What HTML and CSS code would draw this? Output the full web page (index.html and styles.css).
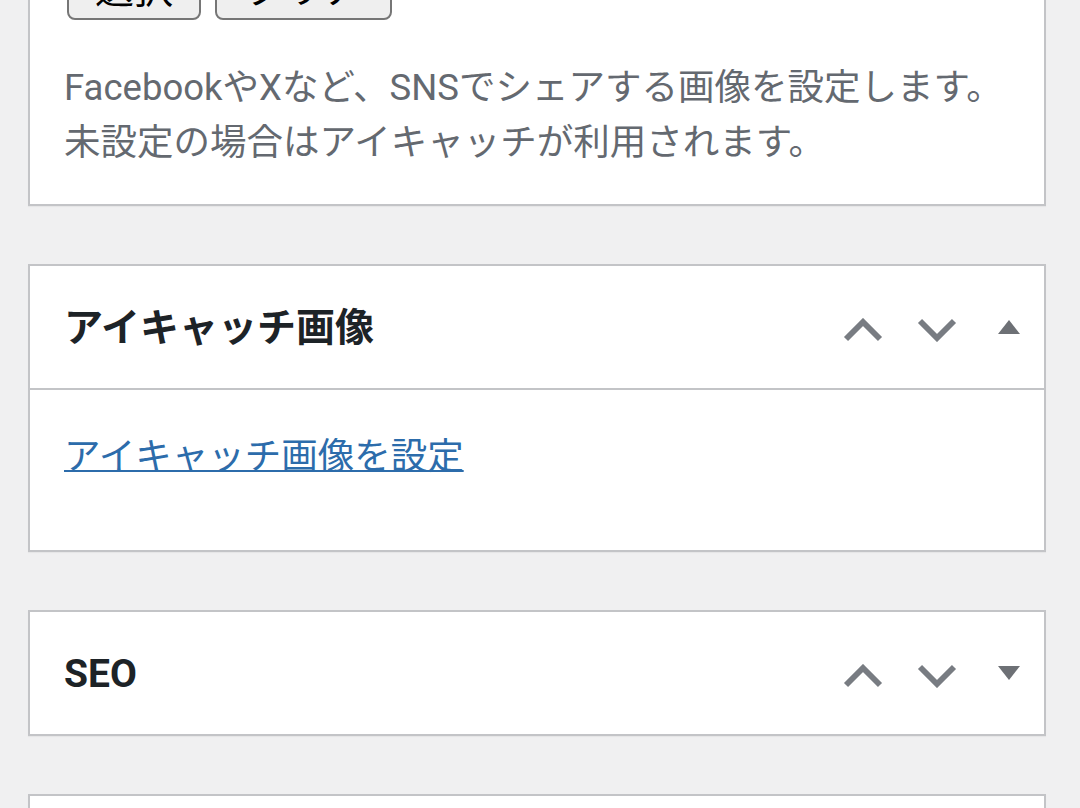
FILE: index.html
```html
<!DOCTYPE html>
<html lang="ja">
<head>
<meta charset="utf-8">
<title>投稿の編集</title>
<link rel="stylesheet" href="styles.css">
</head>
<body>
<div class="meta-boxes">
  <section class="postbox postbox-open">
    <div class="inside inside-top">
      <div class="button-row">
        <button class="plain-button" type="button">選択</button>
        <button class="plain-button plain-button-wide" type="button">クリア</button>
      </div>
      <p class="description">FacebookやXなど、SNSでシェアする画像を設定します。<br>未設定の場合はアイキャッチが利用されます。</p>
    </div>
  </section>

  <section class="postbox">
    <header class="postbox-header with-divider">
      <h2 class="hndle">アイキャッチ画像</h2>
      <div class="handle-actions">
        <button class="handle-button" type="button" aria-label="上へ移動">
          <svg class="chevron" viewBox="0 0 40 24"><polyline points="3,21 20,4 37,21"/></svg>
        </button>
        <button class="handle-button" type="button" aria-label="下へ移動">
          <svg class="chevron" viewBox="0 0 40 24"><polyline points="3,3 20,20 37,3"/></svg>
        </button>
        <button class="handle-button toggle-button" type="button" aria-label="パネルを閉じる">
          <svg class="toggle" viewBox="0 0 22 16"><polygon points="0,15 11,1 22,15"/></svg>
        </button>
      </div>
    </header>
    <div class="inside inside-link">
      <p class="link-line"><a href="#" class="set-thumbnail">アイキャッチ画像を設定</a></p>
    </div>
  </section>

  <section class="postbox">
    <header class="postbox-header">
      <h2 class="hndle">SEO</h2>
      <div class="handle-actions">
        <button class="handle-button" type="button" aria-label="上へ移動">
          <svg class="chevron" viewBox="0 0 40 24"><polyline points="3,21 20,4 37,21"/></svg>
        </button>
        <button class="handle-button" type="button" aria-label="下へ移動">
          <svg class="chevron" viewBox="0 0 40 24"><polyline points="3,3 20,20 37,3"/></svg>
        </button>
        <button class="handle-button toggle-button" type="button" aria-label="パネルを開く">
          <svg class="toggle" viewBox="0 0 22 16"><polygon points="0,1 22,1 11,15"/></svg>
        </button>
      </div>
    </header>
  </section>

  <section class="postbox postbox-next">
    <header class="postbox-header"></header>
  </section>
</div>
</body>
</html>
```

FILE: styles.css
```css
html, body {
  margin: 0;
  padding: 0;
  background: #f0f0f1;
  overflow: hidden;
}

body {
  font-family: Roboto, "Noto Sans CJK JP", sans-serif;
  color: #1d2327;
  padding: 0 34px 0 28px;
}

.meta-boxes {
  display: flex;
  flex-direction: column;
  gap: 58px;
  margin-top: -60px;
}

.postbox {
  background: #fff;
  border: 2px solid #c3c4c7;
  box-shadow: 0 1px 1px rgba(0, 0, 0, 0.04);
}

/* first panel: its header sits above the visible area */
.inside-top {
  padding: 18px 34px 34px 34px;
}

.button-row {
  display: flex;
  gap: 14px;
  padding-left: 3px;
}

.plain-button {
  font-family: Roboto, "Noto Sans CJK JP", sans-serif;
  font-size: 39px;
  line-height: 56px;
  height: 60px;
  padding: 0 26px;
  color: #000;
  background: #efefef;
  border: 2px solid #767676;
  border-radius: 8px;
}

.plain-button-wide {
  padding: 0 28px;
}

.description {
  margin: 40px 0 0;
  font-size: 36.5px;
  line-height: 55px;
  color: #646970;
}

.postbox-header {
  display: flex;
  align-items: center;
  justify-content: space-between;
  height: 122px;
  padding-left: 34px;
}

.postbox-header.with-divider {
  border-bottom: 2px solid #c3c4c7;
}

.hndle {
  margin: 0;
  font-size: 39px;
  font-weight: 700;
  line-height: 1;
  color: #1d2327;
  padding-top: 2px;
}

.handle-actions {
  display: flex;
  align-self: stretch;
  align-items: center;
}

.handle-button {
  width: 74px;
  height: 100%;
  padding: 0;
  margin: 0;
  border: 0;
  background: transparent;
  display: flex;
  align-items: center;
  justify-content: center;
}

.toggle-button {
  width: 70px;
}

.chevron {
  width: 40px;
  height: 24px;
  fill: none;
  stroke: #787c82;
  stroke-width: 5.8;
  margin-top: 6px;
}

.toggle {
  width: 22px;
  height: 16px;
  fill: #6d7075;
}

.inside-link {
  padding: 42px 34px 68px;
}

.link-line {
  margin: 0;
  font-size: 36.5px;
  line-height: 50px;
}

.set-thumbnail {
  color: #2c6cab;
  text-decoration: underline;
  text-decoration-thickness: 2px;
}

.postbox-next .postbox-header {
  height: 122px;
}
```
